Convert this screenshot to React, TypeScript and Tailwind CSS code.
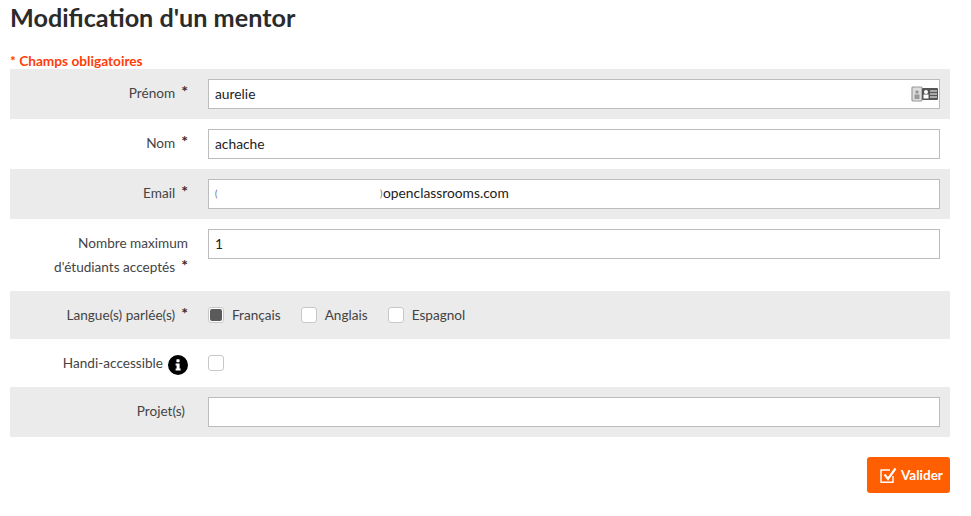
import type { ReactNode } from 'react';

function Star() {
  return <span className="ml-[6px] align-[1px] text-[16px] font-bold leading-none text-[#3a2a2a]">*</span>;
}

interface RowProps {
  label: ReactNode;
  shaded?: boolean;
  height?: string;
  children: ReactNode;
}

function Row({ label, shaded, height = 'h-[50px]', children }: RowProps) {
  return (
    <div className={`flex ${height} pt-[10px] ${shaded ? 'bg-[#ebebeb]' : 'bg-white'}`}>
      <div className="w-[178px] shrink-0 pt-[2px] text-right text-[13.6px] leading-[24px] text-[#444]">{label}</div>
      <div className="ml-[20px] w-[732px]">{children}</div>
    </div>
  );
}

function TextInput({ value, icon }: { value: string; icon?: boolean }) {
  return (
    <div className="relative">
      <input
        readOnly
        value={value}
        className="block h-[30px] w-full border border-[#bcbcbc] bg-white px-[6px] pb-[1px] text-[13.8px] text-[#222] outline-none"
      />
      {icon && <ContactIcon />}
    </div>
  );
}

function ContactIcon() {
  return (
    <svg viewBox="0 0 28 16" className="absolute right-[1px] top-[7px] h-[16px] w-[28px]">
      <rect x="1" y="1" width="10" height="14" rx="1" fill="#ddd" stroke="#999" strokeWidth="1.2" />
      <circle cx="6" cy="6" r="1.8" fill="#999" />
      <rect x="3.5" y="8.5" width="5" height="4.5" fill="#999" />
      <rect x="11" y="2" width="16" height="12" rx="1" fill="#555" />
      <circle cx="15" cy="6" r="2" fill="#fff" />
      <rect x="12.5" y="8.5" width="5" height="4" fill="#fff" />
      <path d="M19 5h7M19 8h7M19 11h7" stroke="#fff" strokeWidth="1.2" />
    </svg>
  );
}

function Box({ label, checked }: { label?: string; checked?: boolean }) {
  return (
    <label className="flex items-center gap-[8px] text-[13.6px] text-[#444]">
      <span className="flex h-[16px] w-[16px] items-center justify-center rounded-[3px] border border-[#c8c8c8] bg-white">
        {checked && <span className="h-[12px] w-[12px] rounded-[2px] bg-[#5a5a5a]" />}
      </span>
      {label && <span>{label}</span>}
    </label>
  );
}

function InfoBadge() {
  return (
    <svg viewBox="0 0 20 20" className="mt-[4px] h-[20px] w-[20px]">
      <circle cx="10" cy="10" r="10" fill="#000" />
      <rect x="8.4" y="4.2" width="3.2" height="3" rx="0.6" fill="#fff" />
      <path d="M7.6 8.6h4v5h1v1.9H7.6v-1.9h1v-3.1h-1z" fill="#fff" />
    </svg>
  );
}

export default function App() {
  return (
    <div className="min-h-[516px] w-[950px] bg-white pl-[10px] font-['Lato',sans-serif]">
      <h1 className="pt-[2px] text-[25.2px] font-bold leading-[30px] text-[#2b2b2b]">Modification d'un mentor</h1>
      <p className="mt-[20px] text-[13.7px] font-bold leading-[17px] text-[#ff3d0a]">* Champs obligatoires</p>
      <form>
        <Row shaded label={<>Prénom<Star /></>}>
          <TextInput value="aurelie" icon />
        </Row>
        <Row label={<>Nom<Star /></>}>
          <TextInput value="achache" />
        </Row>
        <Row shaded label={<>Email<Star /></>}>
          <div className="flex h-[30px] items-center border border-[#bcbcbc] bg-white pb-[1px] pl-[6px] text-[13.8px] text-[#222]">
            <span className="w-[4px] text-[9px] text-[#666]">(</span>
            <span className="ml-[161px] w-[3px] text-[9px] text-[#666]">)</span>
            <span>openclassrooms.com</span>
          </div>
        </Row>
        <Row height="h-[72px]" label={<>Nombre maximum<br />d'étudiants acceptés<Star /></>}>
          <TextInput value="1" />
        </Row>
        <Row shaded height="h-[48px]" label={<>Langue(s) parlée(s)<Star /></>}>
          <div className="flex h-[28px] items-center gap-[20px]">
            <Box label="Français" checked />
            <Box label="Anglais" />
            <Box label="Espagnol" />
          </div>
        </Row>
        <Row height="h-[48px]" label={
          <span className="flex justify-end gap-[5px]">
            Handi-accessible
            <InfoBadge />
          </span>
        }>
          <div className="flex h-[28px] items-center"><Box /></div>
        </Row>
        <Row shaded label={<span className="pr-[3px]">Projet(s)</span>}>
          <TextInput value="" />
        </Row>
        <div className="mt-[20px] flex justify-end">
          <button type="button" className="flex h-[36px] w-[83px] items-center gap-[4px] rounded-[3px] bg-[#ff5f00] pl-[13px] text-[13.5px] font-bold text-white">
            <svg viewBox="0 0 17 17" className="h-[17px] w-[17px]">
              <path d="M13 9v6.2H1V3h9" fill="none" stroke="#fff" strokeWidth="1.4" />
              <path d="M4.5 7.5l3.5 4.5L15.5 1.5" fill="none" stroke="#fff" strokeWidth="2.2" />
            </svg>
            Valider
          </button>
        </div>
      </form>
    </div>
  );
}
